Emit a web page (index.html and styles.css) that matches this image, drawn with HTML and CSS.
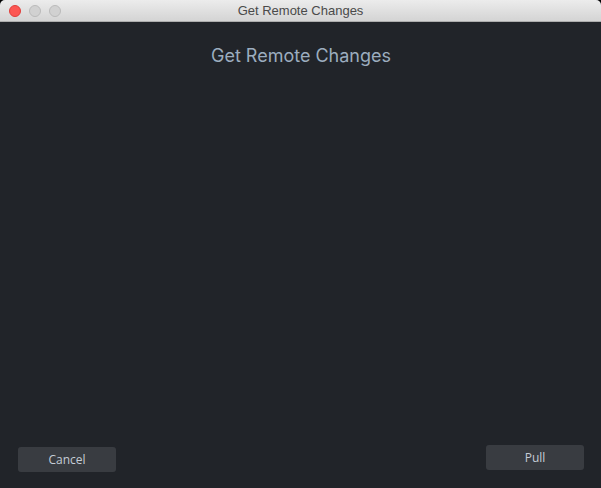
FILE: index.html
```html
<!DOCTYPE html>
<html>
<head>
<meta charset="utf-8">
<link rel="stylesheet" href="styles.css">
</head>
<body>
<div class="window">
  <div class="titlebar">
    <div class="lights">
      <span class="light close"></span>
      <span class="light off"></span>
      <span class="light off"></span>
    </div>
    <div class="wintitle">Get Remote Changes</div>
  </div>
  <div class="content">
    <h1 class="heading">Get Remote Changes</h1>
    <div class="spacer"></div>
    <div class="footer">
      <button class="btn cancel">Cancel</button>
      <button class="btn pull">Pull</button>
    </div>
  </div>
</div>
</body>
</html>
```
FILE: styles.css
```css
html, body {
  margin: 0;
  padding: 0;
  background: #000;
}
.window {
  width: 601px;
  height: 488px;
  display: flex;
  flex-direction: column;
  background: #212429;
  border-radius: 5px 5px 0 0;
  overflow: hidden;
}
.titlebar {
  position: relative;
  height: 21px;
  flex: 0 0 21px;
  background: linear-gradient(#ececec, #d4d4d4);
  border-bottom: 1px solid #adadad;
  display: flex;
  align-items: center;
  justify-content: center;
}
.lights {
  position: absolute;
  left: 9px;
  top: 5px;
  display: flex;
  gap: 8px;
}
.light {
  width: 12px;
  height: 12px;
  border-radius: 50%;
  box-sizing: border-box;
}
.light.close {
  background: #fc5753;
  border: 1px solid #df3e3b;
}
.light.off {
  background: #d1d1d1;
  border: 1px solid #bababa;
}
.wintitle {
  font-family: "Liberation Sans", Arial, sans-serif;
  font-size: 13px;
  color: #4a4a4a;
  line-height: 21px;
}
.content {
  flex: 1;
  display: flex;
  flex-direction: column;
  padding: 0 17px 16px 18px;
}
.heading {
  margin: 23px 0 0 0;
  text-align: center;
  font-family: Inter, "Liberation Sans", sans-serif;
  font-weight: 400;
  font-size: 18px;
  line-height: 22px;
  color: #9cadbf;
}
.spacer { flex: 1; }
.footer {
  display: flex;
  justify-content: space-between;
  align-items: flex-end;
}
.btn {
  width: 98px;
  height: 25px;
  border: none;
  border-radius: 3px;
  background: #393c41;
  color: #c5cdd6;
  font-family: "Open Sans", "Noto Sans", sans-serif;
  font-size: 12px;
  padding: 0;
}
.btn.pull {
  margin-bottom: 2px;
}
```
